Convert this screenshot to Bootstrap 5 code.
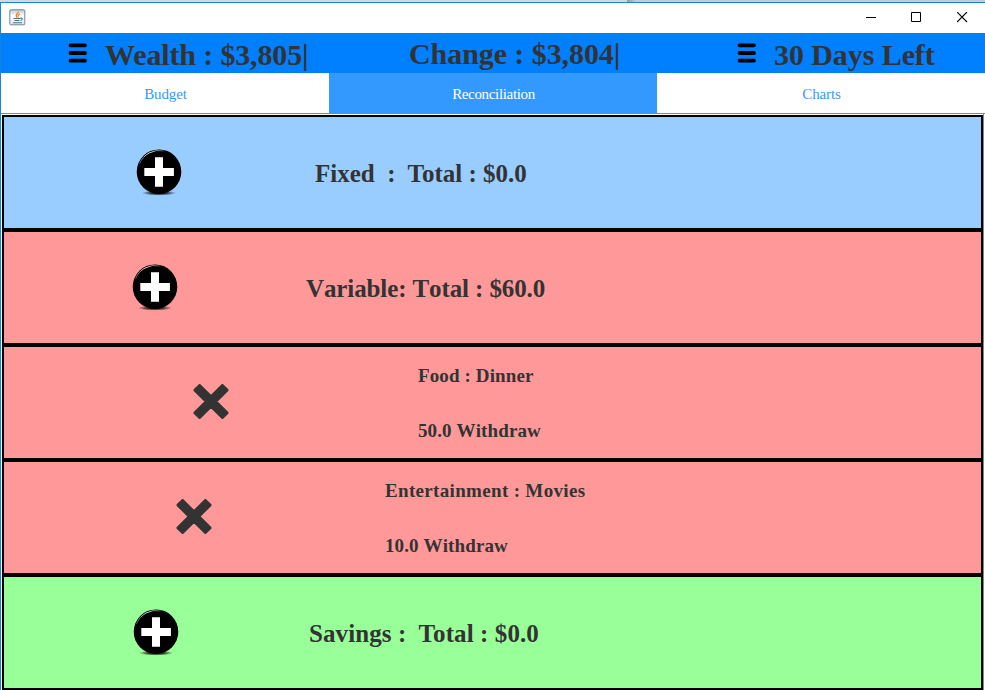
<!DOCTYPE html>
<html lang="en">
<head>
<meta charset="utf-8">
<title>Budget</title>
<link href="https://cdn.jsdelivr.net/npm/bootstrap@5.3.0/dist/css/bootstrap.min.css" rel="stylesheet">
<style>
body{font-family:"Liberation Serif","Times New Roman",serif;color:#333;width:985px;height:690px;overflow:hidden;font-kerning:none}
svg{display:block;flex:none}
.desk{height:2px;background:linear-gradient(90deg,#d8d8d8 627px,#999 627px,#c8c9d2 636px)}
.win{height:688px;border-top:1px solid #1883d7;border-left:1px solid #1883d7}
.titlebar{height:30px;padding:0 17px 2px 8px}
.ctl{gap:35px}
.topbar{height:40px;background:#007fff;font-size:30px;line-height:34px;font-weight:bold;white-space:pre}
.topbar>div{width:328px;padding-top:5px}
.burger{margin-top:4px}
.kern{font-kerning:normal}
.wealth{margin-left:17px;letter-spacing:-.14px}
.days{margin-left:17px;letter-spacing:-.08px}
.stat-a{padding-left:67px}
.topbar>.stat-b{padding-left:80px;padding-top:4px;letter-spacing:-.07px}
.stat-c{padding-left:80px}
.tabs{height:41px;border-bottom:1px solid #7a8a99}
.tabs .nav-link{font-size:15px;line-height:40px;padding:1px 0 0 1px;border-radius:0;color:#39f;height:40px;width:328px;flex:none;letter-spacing:-.12px}
.tabs .nav-link.active{background:#39f;color:#fff;letter-spacing:-.34px}
.listbox{padding:1px 0 0 1px;width:983px;border-right:1px solid #7a8a99}
.entry{height:115px;border:2px solid #000;white-space:pre;font-weight:bold}
.entry>svg{margin-bottom:2px}
.fixed-bg{background:#9cf}.var-bg{background:#f99}.sav-bg{background:#9f9}
.total{font-size:25px;line-height:30px;padding-top:2px}
.detail{font-size:19px;line-height:55px;letter-spacing:.12px}
.i1{padding-left:131px}.i2{padding-left:127px}.i3{padding-left:188px}.i4{padding-left:171px}.i5{padding-left:128px}
.t1{margin-left:132px;font-kerning:normal}
.t2{margin-left:127px;letter-spacing:-.11px}
.t3{margin-left:188px}
.t4{margin-left:172px}
.t5{margin-left:129px;letter-spacing:.09px;font-kerning:normal}
.wide{letter-spacing:.33px}
</style>
<script src="https://cdn.jsdelivr.net/npm/bootstrap@5.3.0/dist/js/bootstrap.bundle.min.js"></script>
</head>
<body>
<svg width="0" height="0" class="position-absolute">
<defs>
<linearGradient id="gloss" x1="0" y1="0" x2="1" y2="0"><stop offset="0" stop-color="#555"/><stop offset=".4" stop-color="#ddd"/><stop offset="1" stop-color="#444"/></linearGradient>
<radialGradient id="shade"><stop offset="0" stop-color="#000"/><stop offset=".5" stop-color="#000" stop-opacity=".7"/><stop offset="1" stop-color="#000" stop-opacity="0"/></radialGradient>
<linearGradient id="tile" x1="0" y1="0" x2="0" y2="1"><stop offset="0" stop-color="#b8cad6"/><stop offset=".4" stop-color="#fff"/><stop offset="1" stop-color="#dce6ec"/></linearGradient>
<symbol id="plus" viewBox="0 0 48 48"><ellipse cx="24" cy="45" rx="17" ry="2.600" fill="url(#shade)"/><circle cx="24" cy="23.700" r="22.300"/><path d="M4.500 16A21 21 0 0 1 29 3" fill="none" stroke="url(#gloss)" stroke-width="1"/><path d="M20 9.300h8v10.800h10.900v7.900h-10.900v10.700h-8v-10.700H9.300v-7.900h10.700z" fill="#fff"/></symbol>
<symbol id="cross" viewBox="0 0 36 36"><path d="M6.300 1.500 18 13.200 29.700 1.500 34.500 6.300 22.800 18 34.500 29.700 29.700 34.500 18 22.800 6.300 34.500 1.500 29.700 13.200 18 1.500 6.300Z" fill="#333" stroke="#333" stroke-width="3" stroke-linejoin="round"/></symbol>
<symbol id="burger" viewBox="0 0 20 22"><path d="M2.500 3.300h14.500M2.500 11h14.500M2.500 18.700h14.500" stroke="#000" stroke-width="3.800" stroke-linecap="round"/></symbol>
</defs></svg>
<div class="desk"></div>
<div class="win d-flex flex-column">
  <div class="titlebar d-flex align-items-center justify-content-between bg-white">
    <svg width="17" height="17" viewBox="0 0 17 17"><rect x=".8" y=".8" width="15" height="15" rx="1" fill="url(#tile)" stroke="#6f8796"/><path d="M9.500 2.500C9.500 5 5.500 5.200 7.800 8.500M11 5C8 6 9.500 7 8.800 8.500" fill="none" stroke="#f08020" stroke-width="1.200"/><path d="M4.500 9.500h7M5.500 11.500h5M4 13.700h9M11.500 9c2.500-.3 2 2 0 2.500" fill="none" stroke="#4b748f" stroke-width="1.100"/></svg>
    <div class="ctl d-flex align-items-center">
      <svg width="11" height="11"><path d="M1 5.500h10" stroke="#000"/></svg>
      <svg width="11" height="11"><path d="M.5.500h9v9h-9z" fill="none" stroke="#000"/></svg>
      <svg width="11" height="11"><path d="M0 0l10 10M10 0L0 10" stroke="#000" stroke-width="1.100"/></svg>
    </div>
  </div>
  <div class="topbar d-flex">
    <div class="stat-a d-flex"><svg class="burger" width="20" height="22"><use href="#burger"/></svg><span class="wealth kern">Wealth : $3,805|</span></div>
    <div class="stat-b d-flex"><span>Change : $3,804|</span></div>
    <div class="stat-c d-flex"><svg class="burger" width="20" height="22"><use href="#burger"/></svg><span class="days">30 Days Left</span></div>
  </div>
  <nav class="tabs nav bg-white text-center flex-nowrap">
    <a class="nav-link">Budget</a><a class="nav-link active">Reconciliation</a><a class="nav-link">Charts</a>
  </nav>
  <main class="listbox">
    <section class="entry fixed-bg d-flex align-items-center i1"><svg width="48" height="48"><use href="#plus"/></svg><div class="total t1">Fixed  :  Total : $0.0</div></section>
    <section class="entry var-bg d-flex align-items-center i2"><svg width="48" height="48"><use href="#plus"/></svg><div class="total t2">Variable: Total : $60.0</div></section>
    <section class="entry var-bg d-flex align-items-center i3"><svg width="38" height="35"><use href="#cross"/></svg><div class="detail t3"><div>Food : Dinner</div><div>50.0 Withdraw</div></div></section>
    <section class="entry var-bg d-flex align-items-center i4"><svg width="38" height="35"><use href="#cross"/></svg><div class="detail t4"><div class="wide">Entertainment : Movies</div><div>10.0 Withdraw</div></div></section>
    <section class="entry sav-bg d-flex align-items-center i5"><svg width="48" height="48"><use href="#plus"/></svg><div class="total t5">Savings :  Total : $0.0</div></section>
  </main>
</div>
</body>
</html>
